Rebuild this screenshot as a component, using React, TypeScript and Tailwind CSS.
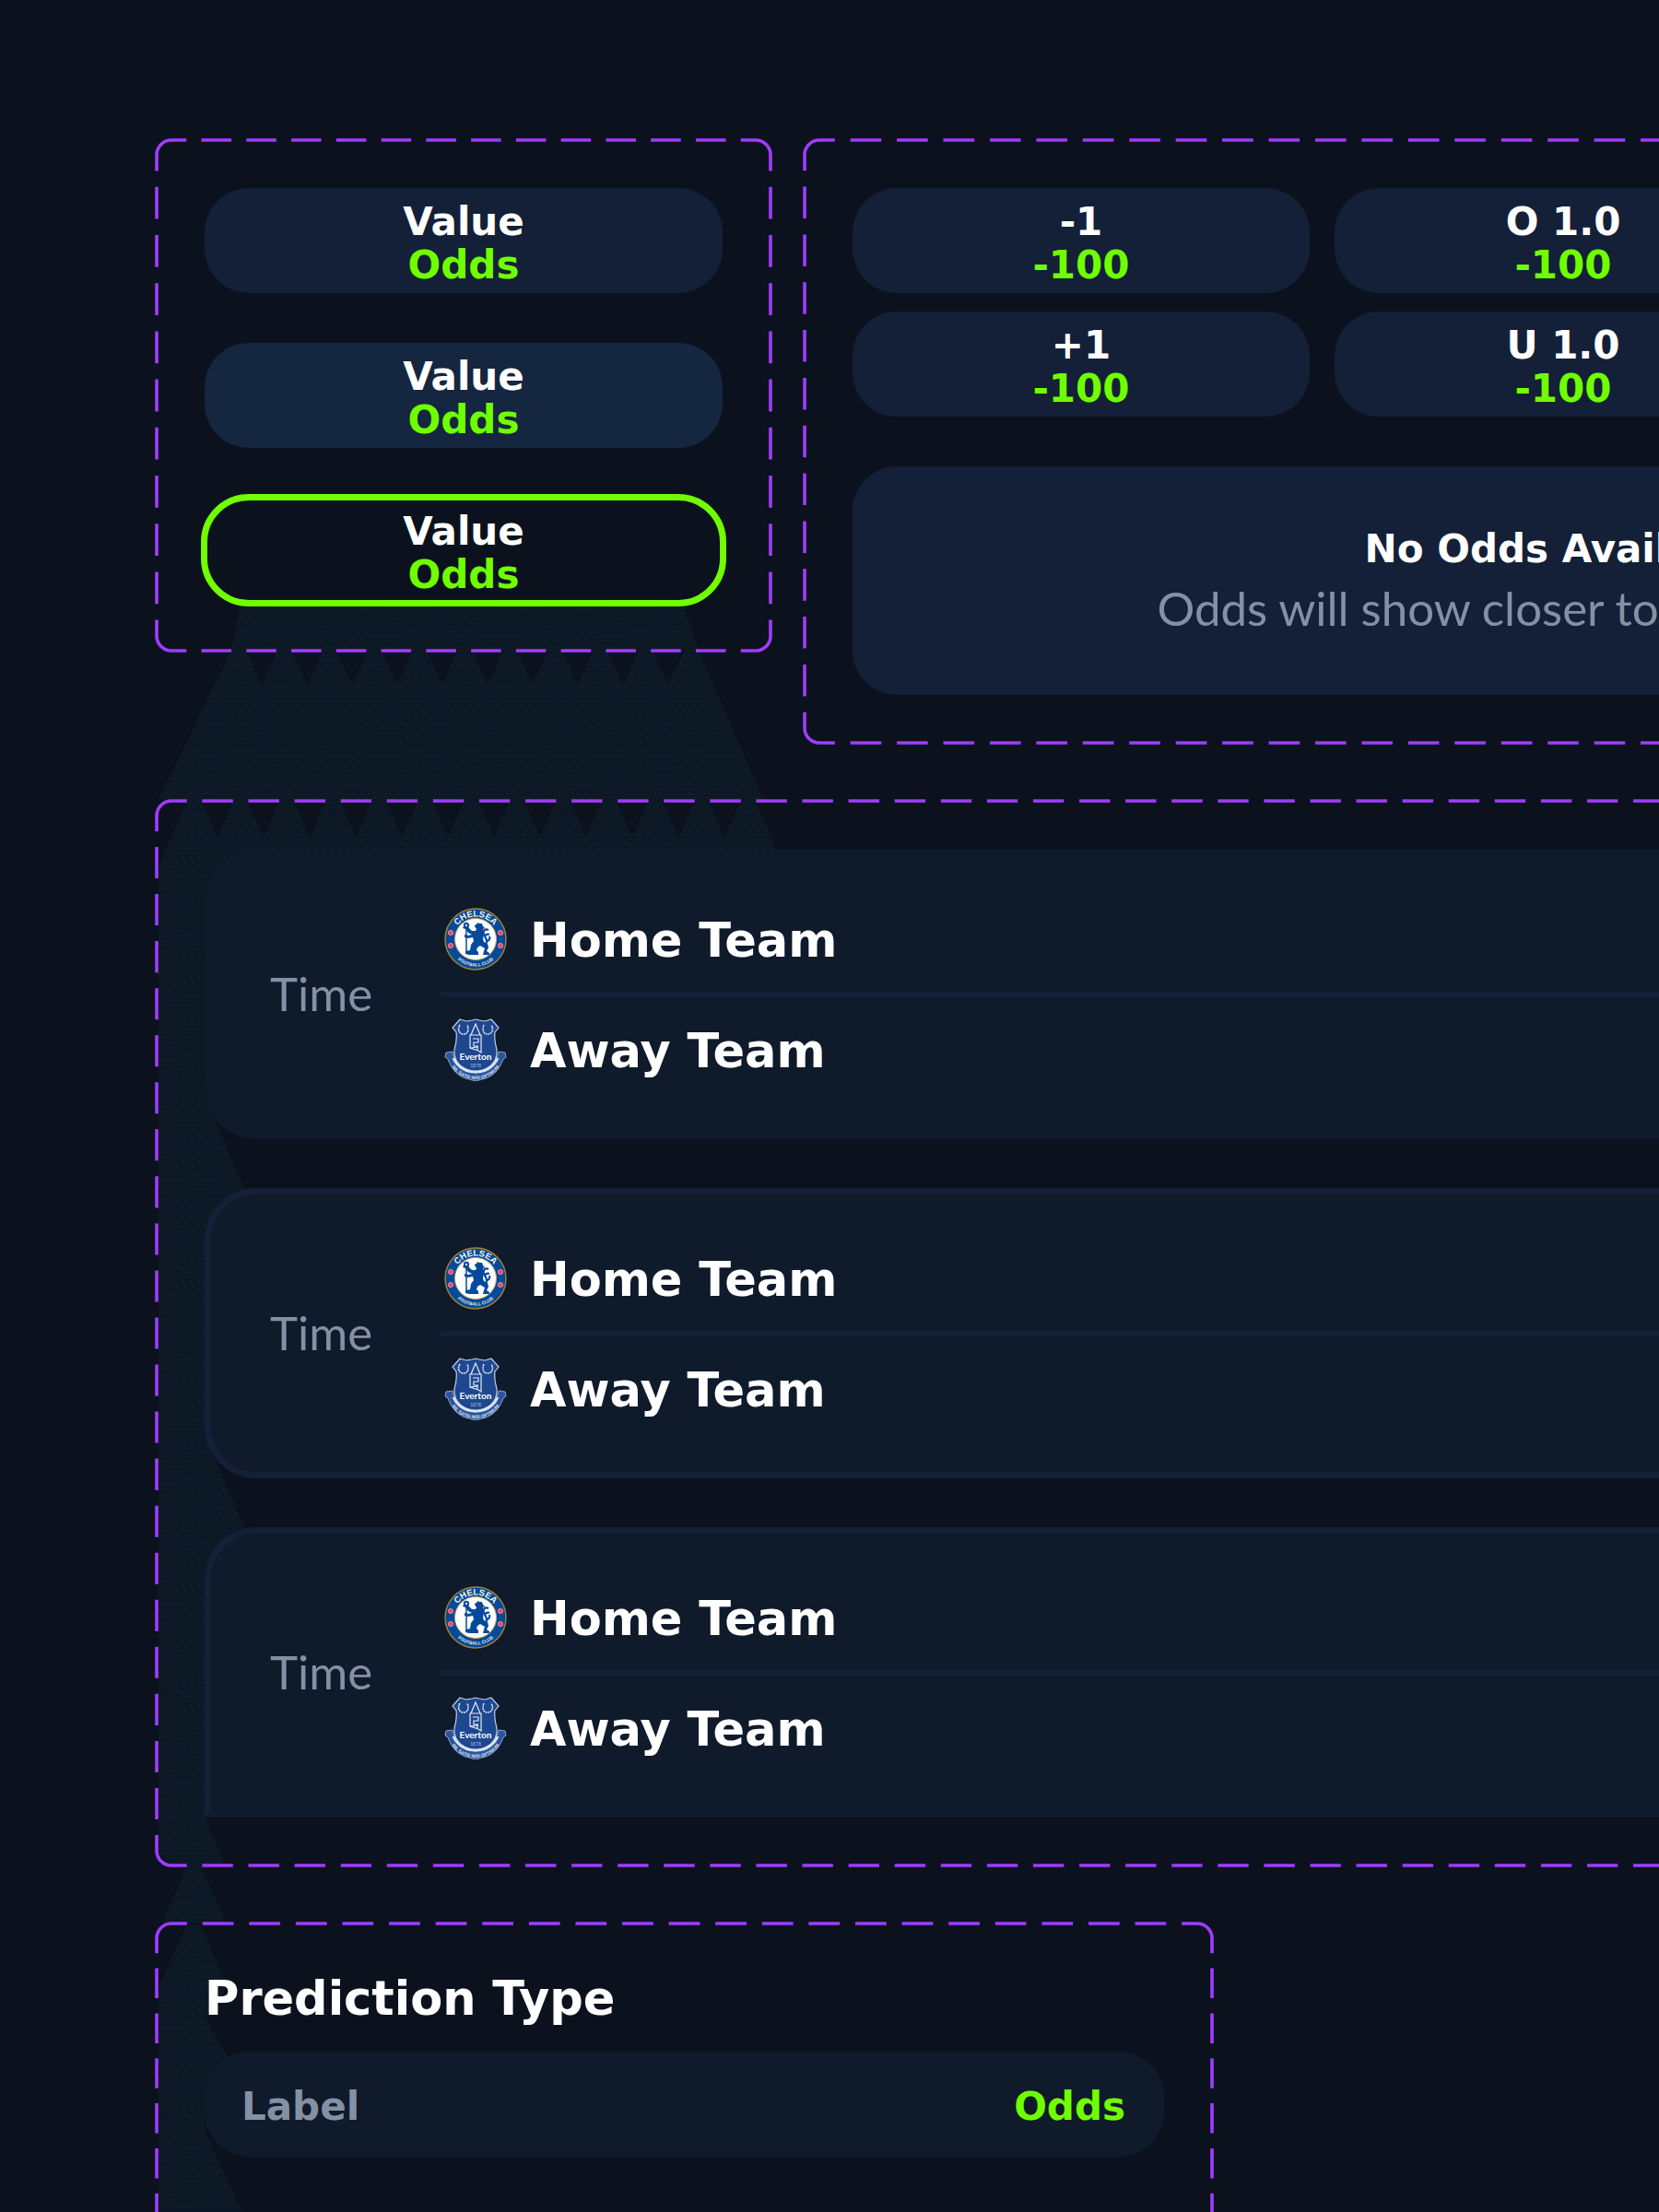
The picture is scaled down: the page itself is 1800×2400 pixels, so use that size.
import React, { useLayoutEffect, useRef, useState } from 'react';
import { clsx } from 'clsx';

const matches = [
  { id: 1, time: 'Time', home: 'Home Team', away: 'Away Team', frame: 'rounded-[56px] border-transparent' },
  { id: 2, time: 'Time', home: 'Home Team', away: 'Away Team', frame: 'rounded-[56px] border-[#141f38]' },
  { id: 3, time: 'Time', home: 'Home Team', away: 'Away Team', frame: 'rounded-t-[56px] border-x-[#141f38] border-t-[#141f38] border-b-transparent' },
];

const lines = [
  { value: '-1', odds: '-100' },
  { value: '+1', odds: '-100' },
  { value: 'O 1.0', odds: '-100' },
  { value: 'U 1.0', odds: '-100' },
];

// Dashed outline with whole corners and evenly fitted dashes on each side
function DashedFrame({ className, children }: { className?: string; children: React.ReactNode }) {
  const ref = useRef<HTMLElement>(null);
  const [size, setSize] = useState({ w: 0, h: 0 });

  useLayoutEffect(() => {
    const el = ref.current;
    if (!el) return;
    const measure = () => setSize({ w: el.offsetWidth, h: el.offsetHeight });
    measure();
    const observer = new ResizeObserver(measure);
    observer.observe(el);
    return () => observer.disconnect();
  }, []);

  const r = 16;
  const a = 2;
  const right = size.w - a;
  const bottom = size.h - a;

  const dash = (length: number) => {
    const period = length / Math.max(1, Math.round(length / 50));
    const on = (period * 2) / 3;
    return { strokeDasharray: `${on} ${period - on}`, strokeDashoffset: on / 2 };
  };
  const across = dash(right - a - r * 2);
  const down = dash(bottom - a - r * 2);

  return (
    <section ref={ref} className={clsx('relative p-[54px]', className)}>
      {size.w > 0 && (
        <svg aria-hidden="true" className="absolute inset-0 size-full" fill="none" stroke="#a03cff" strokeWidth="3.600">
          <path d={`M${a + r} ${a}H${right - r}`} {...across} />
          <path d={`M${a + r} ${bottom}H${right - r}`} {...across} />
          <path d={`M${a} ${a + r}V${bottom - r}`} {...down} />
          <path d={`M${right} ${a + r}V${bottom - r}`} {...down} />
          <path
            d={`M${a} ${a + r}A${r} ${r} 0 0 1 ${a + r} ${a}
              M${right - r} ${a}A${r} ${r} 0 0 1 ${right} ${a + r}
              M${right} ${bottom - r}A${r} ${r} 0 0 1 ${right - r} ${bottom}
              M${a + r} ${bottom}A${r} ${r} 0 0 1 ${a} ${bottom - r}`}
          />
        </svg>
      )}
      {children}
    </section>
  );
}

function OddsButton({ value, odds, state = 'default' }: { value: string; odds: string; state?: 'default' | 'hover' | 'selected' }) {
  return (
    <button
      type="button"
      className={clsx(
        'flex h-[114px] w-full flex-col items-center justify-center rounded-[48px] pt-1.5 text-[42px] leading-[47px] font-bold text-white',
        state === 'default' && 'bg-[#142037]',
        state === 'hover' && 'bg-[#152640]',
        state === 'selected' && 'bg-[#0b121e] outline-7 -outline-offset-3 outline-[#70ff00]',
      )}
    >
      <span>{value}</span>
      <span className="text-[#70ff00]">{odds}</span>
    </button>
  );
}

function HomeCrest() {
  return (
    <svg viewBox="0 0 68 68" className="size-[68px] shrink-0" aria-hidden="true">
      <defs>
        <path id="crest-top" d="M9.5 34a24.5 24.5 0 0 1 49 0" />
        <path id="crest-bottom" d="M4.5 34a29.5 29.5 0 0 0 59 0" />
      </defs>
      <circle cx="34" cy="34" r="33" fill="#034a9c" stroke="#a8842a" strokeWidth="1.4" />
      <circle cx="34" cy="34" r="22.5" fill="#fff" stroke="#c9a856" strokeWidth="1" />
      <text fill="#f4f1e4" fontSize="9.5" fontWeight="700" textAnchor="middle" fontFamily="Liberation Sans">
        <textPath href="#crest-top" startOffset="50%">CHELSEA</textPath>
      </text>
      <text fill="#e6e4da" fontSize="5" fontWeight="700" textAnchor="middle" fontFamily="Liberation Sans">
        <textPath href="#crest-bottom" startOffset="50%">FOOTBALL CLUB</textPath>
      </text>
      <g fill="#f0455c" stroke="#ff9aa5" strokeWidth=".8">
        <circle cx="7" cy="27" r="2.6" />
        <circle cx="7" cy="41" r="2.6" />
        <circle cx="61" cy="27" r="2.6" />
        <circle cx="61" cy="41" r="2.6" />
      </g>
      <g fill="#034a9c">
        <path d="M33 19l2-1 1-2 2 1 3 0 1 3 2 2-2 1 0 3 1 3-1 5 1 3 4 2 1 4-2 4 3 2v2h-7l1-4 1-3-5-3-3 2-1 3 2 2v3H27l-4-1v-3l5-1 1-6 3-4-1-4-5 1-4-1v-3l4 1 4-1-4-2-3-4-3-1 1-2 3-1 3 3 3 3 4 0 1-2-2-3z" />
        <circle cx="24" cy="19" r="3.200" />
      </g>
      <path d="M24 19V49" stroke="#034a9c" strokeWidth="1.500" />
      <circle cx="24" cy="19" r="1.200" fill="#cddbed" />
      <path d="M42 40c5-1 5-4 3-7s1-5 4-4M44 30c-3-3-1-8 4-6M45 35c3 2 5-1 4-4" fill="none" stroke="#034a9c" strokeWidth="2.200" />
      <path d="M42 23l2-1" stroke="#e8414f" strokeWidth="1" />
    </svg>
  );
}

function AwayCrest() {
  return (
    <svg viewBox="0 0 68 68" className="size-[68px] shrink-0" aria-hidden="true">
      <defs>
        <path id="motto" d="M3 43c5 14 17 23 31 23s26-9 31-23" />
      </defs>
      <path
        d="M2 37l7-1c2 13 12 21 25 22 13-1 23-9 25-22l7 1 1 5-3 2c-4 12-12 20-23 22l-7 2-7-2C16 64 8 56 4 44l-3-2z"
        fill="#2a559c"
        stroke="#8ba4cf"
        strokeWidth="1"
      />
      <path
        d="M17 1l7 2 6-1 4-1 4 1 6 1 7-2 8 9-4 5c-1 7 0 12 2 19 1 14-9 22-23 25C20 56 10 48 11 34c2-7 3-12 2-19L9 10z"
        fill="#1d4890"
        stroke="#c3cfe3"
        strokeWidth="1.200"
      />
      <path d="M10 43c4 9 13 15 24 15s20-6 24-15" fill="none" stroke="#dce3ef" strokeWidth="3" />
      <g fill="none" stroke="#e3e9f2">
        <path d="M17 7c-3 5-1 10 4 10s6-5 4-10M43 7c-2 5-1 10 4 10s7-5 4-10" strokeWidth="1.500" strokeDasharray="2 .6" />
        <path d="M34 6l-5 12h10zM28 18h12v19l-3-2-9-3zM31 22h6v4h-5v4h5M28 32l9-1M36 30v5" strokeWidth="1.200" />
      </g>
      <text x="34" y="45" fill="#fff" fontSize="10" textAnchor="middle" fontFamily="Lato" fontWeight="700">Everton</text>
      <text x="34" y="53" fill="#a9bbd9" fontSize="5" textAnchor="middle" fontFamily="Lato">1878</text>
      <text fill="#dbe3f0" fontSize="5" textAnchor="middle" fontFamily="Liberation Sans" fontWeight="700">
        <textPath href="#motto" startOffset="50%">NIL SATIS NISI OPTIMUM</textPath>
      </text>
    </svg>
  );
}

function TeamRow({ crest, name }: { crest: React.ReactNode; name: string }) {
  return (
    <div className="flex h-[68px] items-center gap-[25px] pl-[5px]">
      {crest}
      <span className="pt-1 text-[51px] leading-[64px] font-bold">{name}</span>
    </div>
  );
}

function MatchCard({ match }: { match: (typeof matches)[number] }) {
  return (
    <article className={clsx('flex h-[315px] items-center border-7 bg-[#0f1a2b] pl-16', match.frame)}>
      <time className="w-[184px] shrink-0 pb-0.5 font-['Lato',sans-serif] text-[51px] leading-[60px] text-[#8490a3]">
        {match.time}
      </time>
      <div className="flex flex-1 flex-col gap-[23px]">
        <TeamRow crest={<HomeCrest />} name={match.home} />
        <hr className="h-1.5 rounded-full border-0 bg-[#141f38]" />
        <TeamRow crest={<AwayCrest />} name={match.away} />
      </div>
    </article>
  );
}

// Soft light falling from the selected button through the dashes
function Beams() {
  const upper = Array.from({ length: 10 }, (_, i) => 284 + i * 49);
  const lower = Array.from({ length: 12 }, (_, i) => 236 + i * 50);

  return (
    <svg aria-hidden="true" className="absolute top-0 left-0" width="900" height="2400">
      <defs>
        <pattern id="dots" width="9" height="10" patternUnits="userSpaceOnUse">
          <rect width="9" height="10" fill="#0d1826" />
          <path d="M0 0h1v1H0zM4 1h1v1H4zM2 5h1v1H2zM7 5h1v1H7z" fill="#1d2f22" />
        </pattern>
      </defs>
      <g fill="url(#dots)">
        <path d="M262 650H740L758 706L828 868L820 871L843 924H280V1000H222V1190L265 1290L280 1300V1400H222V1558L265 1658L280 1670V1750H222V1972L244 2023L218 2025L245 2086H176L203 2025L186 2023L172 2010V940L202 872L172 868L251 706Z" />
        <path d="M203 2089H218L246 2156L223 2190L246 2230L260 2240V2290H222V2312L262 2400H172V2156Z" />
      </g>
      <g fill="#0b121e">
        {upper.map(x => (
          <path key={x} d={`M${x - 17} 706h34l-17 37z`} />
        ))}
        {lower.map(x => (
          <path key={x} d={`M${x - 17} 870h34l-17 38z`} />
        ))}
      </g>
    </svg>
  );
}

function App() {
  return (
    <div className="relative h-screen overflow-hidden bg-[#0b121e] pt-[150px] pl-[168px] font-['DejaVu_Sans',sans-serif] text-white">
      <Beams />
      <main className="relative flex flex-col items-start gap-[59px]">
        <div className="flex items-start gap-[33px]">
          <DashedFrame className="flex w-[670px] shrink-0 flex-col gap-[54px]">
            <OddsButton value="Value" odds="Odds" />
            <OddsButton value="Value" odds="Odds" state="hover" />
            <OddsButton value="Value" odds="Odds" state="selected" />
          </DashedFrame>

          <DashedFrame className="flex w-[1650px] shrink-0 flex-col gap-[54px]">
            <div className="grid grid-flow-col grid-cols-3 grid-rows-2 gap-x-[27px] gap-y-5">
              {lines.map(line => (
                <OddsButton key={line.value} value={line.value} odds={line.odds} />
              ))}
            </div>
            <div className="flex h-[248px] flex-col items-center justify-center gap-1 rounded-[48px] bg-[#142037] pb-1">
              <h2 className="text-[42px] leading-[60px] font-bold">No Odds Available</h2>
              <p className="font-['Lato',sans-serif] text-[51px] leading-[60px] text-[#8490a3]">
                Odds will show closer to the event date
              </p>
            </div>
          </DashedFrame>
        </div>

        <DashedFrame className="flex w-[2340px] flex-col gap-[53px]">
          {matches.map(match => (
            <MatchCard key={match.id} match={match} />
          ))}
        </DashedFrame>

        <DashedFrame className="flex min-h-[622px] w-[1149px] flex-col gap-[27px]">
          <h2 className="text-[51px] leading-[60px] font-bold">Prediction Type</h2>
          <button
            type="button"
            className="flex h-[114px] items-center justify-between rounded-[48px] bg-[#0f1a2b] pt-1 pr-[42px] pl-10 text-[42px] leading-[47px] font-bold"
          >
            <span className="text-[#8490a3]">Label</span>
            <span className="text-[#70ff00]">Odds</span>
          </button>
        </DashedFrame>
      </main>
    </div>
  );
}

export default App;
